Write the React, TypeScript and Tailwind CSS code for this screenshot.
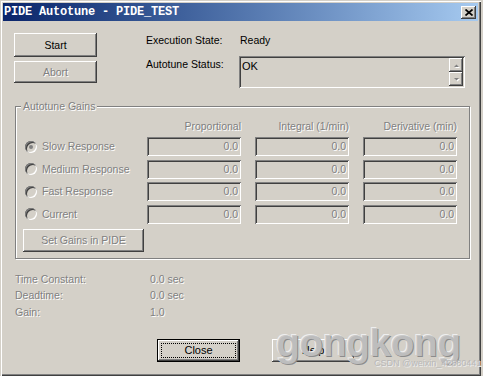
import React from "react";

const raised =
  "shadow-[inset_-1px_-1px_0_#404040,inset_1px_1px_0_#ffffff,inset_-2px_-2px_0_#808080]";
const sunken =
  "shadow-[inset_1px_1px_0_#808080,inset_-1px_-1px_0_#ffffff,inset_2px_2px_0_#404040,inset_-2px_-2px_0_#d4d0c8]";
const dis = "text-[#808080] [text-shadow:1px_1px_0_#ffffff]";

function Btn({
  label,
  disabled,
  isDefault,
  className = "",
}: {
  label: string;
  disabled?: boolean;
  isDefault?: boolean;
  className?: string;
}) {
  if (isDefault) {
    return (
      <div className={`border border-black bg-[#d4d0c8] ${className}`}>
        <div className={`flex h-full w-full items-center justify-center p-[3px] ${raised}`}>
          <div className="flex h-full w-full items-center justify-center border border-dotted border-black text-black">
            {label}
          </div>
        </div>
      </div>
    );
  }
  return (
    <div
      className={`flex items-center justify-center bg-[#d4d0c8] ${raised} ${
        disabled ? dis : "text-black"
      } ${className}`}
    >
      {label}
    </div>
  );
}

function Radio({ label, checked }: { label: string; checked?: boolean }) {
  return (
    <div className="flex h-[19px] items-center">
      <span
        className={`relative flex h-3 w-3 shrink-0 items-center justify-center rounded-full bg-[#d4d0c8] ${sunken}`}
      >
        {checked && <span className="h-1 w-1 rounded-full bg-[#808080]" />}
      </span>
      <span className={`ml-[5px] ${dis}`}>{label}</span>
    </div>
  );
}

function Field({ value }: { value: string }) {
  return (
    <div className={`flex h-[19px] items-center justify-end pr-[3px] bg-[#d4d0c8] ${sunken} ${dis}`}>
      {value}
    </div>
  );
}

function Arrow({ up }: { up?: boolean }) {
  return (
    <div className={`flex h-[15px] w-[14px] items-center justify-center bg-[#d4d0c8] ${raised}`}>
      <svg width="7" height="5" viewBox="0 0 7 5">
        <path d={up ? "M1 4h5L3.5 1.5z" : "M1 1h5L3.5 3.5z"} fill="#ffffff" transform="translate(1 1)" />
        <path d={up ? "M1 4h5L3.5 1.5z" : "M1 1h5L3.5 3.5z"} fill="#808080" />
      </svg>
    </div>
  );
}

const rows: { label: string; checked?: boolean }[] = [
  { label: "Slow Response", checked: true },
  { label: "Medium Response" },
  { label: "Fast Response" },
  { label: "Current" },
];

export default function App() {
  return (
    <div className="relative h-[376px] w-[483px] overflow-hidden bg-[#d4d0c8] font-['Liberation_Sans',Arial,sans-serif] text-[10.5px] leading-[13px]">
      {/* window frame */}
      <div className="h-[376px] w-[481px] p-[3px] shadow-[inset_1px_1px_0_#d4d0c8,inset_2px_2px_0_#ffffff,inset_-1px_-1px_0_#404040,inset_-2px_-2px_0_#808080]">
        {/* title bar */}
        <div className="flex h-[18px] items-center justify-between bg-gradient-to-r from-[#0a246a] to-[#a6caf0] pl-[1px] pr-[2px]">
          <span className="font-['Liberation_Mono',monospace] text-[12px] font-bold tracking-[-0.2px] text-white">
            PIDE Autotune - PIDE_TEST
          </span>
          <div className={`flex h-[13px] w-[15px] items-center justify-center bg-[#d4d0c8] ${raised}`}>
            <svg width="8" height="7" viewBox="0 0 8 7">
              <path d="M0.5 0.5l7 6M7.5 0.5l-7 6" stroke="#000" strokeWidth="1.7" />
            </svg>
          </div>
        </div>

        <div className="pl-[11px] pt-[12px]">
          {/* top section */}
          <div className="flex">
            <div className="flex w-[83px] flex-col gap-[4px]">
              <Btn label="Start" className="h-[24px]" />
              <Btn label="Abort" disabled className="h-[22px]" />
            </div>
            <div className="ml-[49px] flex flex-col pt-[1px]">
              <div className="flex h-[22px]">
                <span className="w-[94px]">Execution State:</span>
                <span>Ready</span>
              </div>
              <div className="flex">
                <span className="w-[93px] pt-[2px]">Autotune Status:</span>
                <div className={`flex h-[32px] w-[226px] justify-between bg-[#d4d0c8] p-[2px] ${sunken}`}>
                  <span className="pl-[1px] pt-[2px] text-[11px] text-black">OK</span>
                  <div className="flex flex-col">
                    <Arrow up />
                    <Arrow />
                  </div>
                </div>
              </div>
            </div>
          </div>

          {/* autotune gains group */}
          <div className="relative ml-[1px] mt-[18px] w-[455px] border border-[#808080] pb-[6px] pl-[9px] pt-[13px] shadow-[1px_1px_0_#ffffff,inset_1px_1px_0_#ffffff]">
            <span className={`absolute -top-[7px] left-[5px] bg-[#d4d0c8] px-[2px] ${dis}`}>
              Autotune Gains
            </span>
            <div className="grid grid-cols-[108px_94px_94px_94px] gap-x-[14px] gap-y-[3.5px]">
              <span />
              <span className={`mb-[0.5px] text-right ${dis}`}>Proportional</span>
              <span className={`mb-[0.5px] text-right ${dis}`}>Integral (1/min)</span>
              <span className={`mb-[0.5px] text-right ${dis}`}>Derivative (min)</span>
              {rows.map((r) => (
                <React.Fragment key={r.label}>
                  <Radio label={r.label} checked={r.checked} />
                  <Field value="0.0" />
                  <Field value="0.0" />
                  <Field value="0.0" />
                </React.Fragment>
              ))}
            </div>
            <Btn label="Set Gains in PIDE" disabled className="-ml-[2px] mt-[5px] h-[23px] w-[121px]" />
          </div>

          {/* model results */}
          <div className={`ml-[1px] mt-[12px] flex flex-col leading-[16.5px] ${dis}`}>
            {[
              ["Time Constant:", "0.0 sec"],
              ["Deadtime:", "0.0 sec"],
              ["Gain:", "1.0"],
            ].map(([k, v]) => (
              <div key={k} className="flex">
                <span className="w-[135px]">{k}</span>
                <span>{v}</span>
              </div>
            ))}
          </div>

          {/* dialog buttons */}
          <div className="ml-[143px] mt-[19px] flex gap-[32px] text-[11px]">
            <Btn label="Close" isDefault className="h-[23px] w-[83px]" />
            <Btn label="Help" className="h-[23px] w-[82px]" />
          </div>
        </div>
      </div>

      {/* watermark overlay */}
      <span className="pointer-events-none absolute left-[276px] top-[320px] whitespace-nowrap font-['Liberation_Sans',Arial,sans-serif] text-[39px] font-bold leading-[46px] tracking-[-0.5px] text-[#c4c4c4]/90 [text-shadow:1px_1px_0_#8c8c8c,-1px_-1px_0_#eeeeee]">
        gongkong
      </span>
      <span className="pointer-events-none absolute left-[374px] top-[358px] whitespace-nowrap font-['Liberation_Sans',Arial,sans-serif] text-[9px] leading-[11px] text-[#b8b8b8] [text-shadow:1px_1px_0_#eeeeee]">
        CSDN @weixin_42880441
      </span>
    </div>
  );
}
